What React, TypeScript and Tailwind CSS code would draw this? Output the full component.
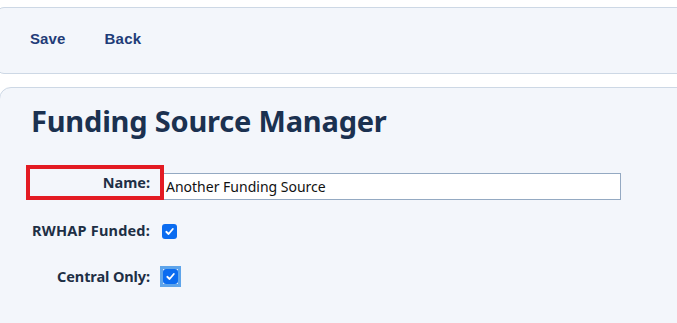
import React from "react";

export default function App() {
  return (
    <div className="w-[677px] h-[323px] overflow-hidden bg-white" style={{ fontFamily: '"Noto Sans", sans-serif' }}>
      <div className="mt-[7px] ml-[-4px] mr-[-12px] h-[67px] border border-[#cdd8e5] rounded-[8px] bg-[#f3f6fb] flex items-center pl-[33px] gap-[39px] pb-[2px]">
        <span className="font-['Liberation_Sans'] font-bold text-[15px] text-[#1f3c78] tracking-[0.1px]">Save</span>
        <span className="font-['Liberation_Sans'] font-bold text-[15px] text-[#1f3c78] tracking-[0.3px]">Back</span>
      </div>
      <div className="mt-[13px] ml-[-1px] mr-[-12px] h-[260px] border border-[#cdd8e5] rounded-[12px] bg-[#f3f6fb] pl-[31px] pt-[13px]">
        <h1 className="text-[29px] leading-[40px] font-bold text-[#1b3150] tracking-[-0.2px]">Funding Source Manager</h1>
        <div className="mt-[24px] flex items-start">
          <div className="relative z-10 w-[138px] h-[35px] ml-[-5px] border-[4px] border-[#e31b23] flex items-center justify-end pr-[10px] pt-[1px]">
            <span className="text-[14.5px] font-bold text-[#1e2f45]">Name:</span>
          </div>
          <div className="ml-[-4px] mt-[8px] w-[461px] h-[27px] border border-[#94a9c2] bg-white flex items-center pl-[5px]">
            <span className="text-[14px] text-[#111]">Another Funding Source</span>
          </div>
        </div>
        <div className="mt-[22px] flex items-center h-[18px]">
          <span className="w-[119px] text-right text-[14.5px] font-bold text-[#1e2f45] tracking-[0.2px]">RWHAP Funded:</span>
          <span className="ml-[12px] w-[15px] h-[15px] rounded-[3px] bg-[#0b6cf0] flex items-center justify-center">
            <svg width="11" height="11" viewBox="0 0 12 12"><path d="M2.5 6.3 L5 8.7 L9.6 3.3" stroke="white" strokeWidth="2" fill="none" strokeLinecap="round" strokeLinejoin="round" /></svg>
          </span>
        </div>
        <div className="mt-[26px] flex items-center h-[21px]">
          <span className="w-[119px] text-right text-[14.5px] font-bold text-[#1e2f45] tracking-[-0.1px]">Central Only:</span>
          <span className="ml-[10px] w-[21px] h-[21px] border-[3px] border-[#5ea4ea] flex items-center justify-center">
            <span className="w-[15px] h-[15px] rounded-[3px] bg-[#0b6cf0] flex items-center justify-center">
              <svg width="11" height="11" viewBox="0 0 12 12"><path d="M2.5 6.3 L5 8.7 L9.6 3.3" stroke="white" strokeWidth="2" fill="none" strokeLinecap="round" strokeLinejoin="round" /></svg>
            </span>
          </span>
        </div>
      </div>
    </div>
  );
}
